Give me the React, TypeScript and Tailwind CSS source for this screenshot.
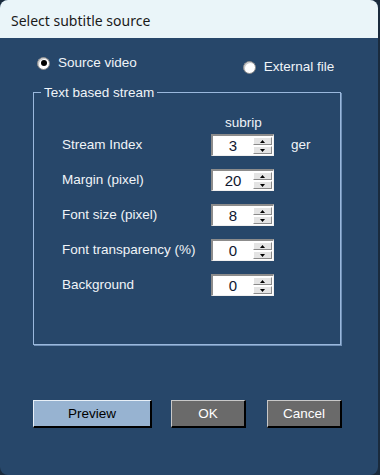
import React from "react";

const ui = { fontFamily: '"Liberation Sans", Arial, sans-serif' };

function Radio({ checked, label }: { checked?: boolean; label: string }) {
  return (
    <label className="flex items-center gap-[8px] text-[13.5px] text-[#f0f4f8]">
      <span className="w-[13px] h-[13px] rounded-full bg-white border border-[#8a8a8a] flex items-center justify-center shadow-[inset_1px_1px_0_#c8c8c8]">
        {checked && <span className="w-[6px] h-[6px] rounded-full bg-black" />}
      </span>
      {label}
    </label>
  );
}

function Spinner({ value }: { value: string }) {
  return (
    <div className="flex w-[63px] h-[22px] bg-white border-t-2 border-l-2 border-t-[#8c8c8c] border-l-[#8c8c8c] border-b border-r border-b-[#f0f0f0] border-r-[#f0f0f0]">
      <div className="flex-1 flex items-center justify-center text-[15px] text-[#101830]">
        {value}
      </div>
      <div className="w-[20px] flex flex-col gap-[1px] py-[1px] pr-[1px]">
        <div className="flex-1 bg-[#e4e4e4] border border-[#8a8a8a] border-t-white border-l-white flex items-center justify-center">
          <svg width="5" height="3" viewBox="0 0 5 3"><path d="M2.5 0L5 3H0z" fill="#000" /></svg>
        </div>
        <div className="flex-1 bg-[#e4e4e4] border border-[#8a8a8a] border-t-white border-l-white flex items-center justify-center">
          <svg width="5" height="3" viewBox="0 0 5 3"><path d="M0 0h5L2.5 3z" fill="#000" /></svg>
        </div>
      </div>
    </div>
  );
}

const rows = [
  { label: "Stream Index", value: "3", extra: "ger" },
  { label: "Margin (pixel)", value: "20" },
  { label: "Font size (pixel)", value: "8" },
  { label: "Font transparency (%)", value: "0" },
  { label: "Background", value: "0" },
];

export default function App() {
  return (
    <div className="w-[380px] h-[475px] bg-[#1a2b3d] pr-[2px]" style={ui}>
      <div className="h-full rounded-[8px] overflow-hidden flex flex-col bg-[#27476a]">
        {/* title bar */}
        <div className="h-[38px] bg-[#eaf5f9] flex items-center pl-[11px] pt-[2px] shrink-0">
          <span className="text-[14px] text-[#1a1a1a]" style={{ fontFamily: '"Noto Sans", "Open Sans", sans-serif' }}>
            Select subtitle source
          </span>
        </div>

        <div className="flex-1 flex flex-col pl-[33px]">
          {/* source radios */}
          <div className="flex items-start mt-[15px] pl-[4px]">
            <Radio checked label="Source video" />
            <div className="ml-[106px] mt-[4px]">
              <Radio label="External file" />
            </div>
          </div>

          {/* group box */}
          <fieldset className="mt-[8px] w-[308px] h-[260px] border border-[#9ab8dc] shadow-[1px_1px_0_#6f8fb5]">
            <legend className="ml-[7px] px-[3px] text-[13.5px] text-[#f0f4f8] leading-[15px]">
              Text based stream
            </legend>
            <div className="pl-[28px] pt-[15px]">
              <div className="pl-[163px] text-[13.5px] text-[#f0f4f8] leading-[15px] mb-[4px]">subrip</div>
              <div className="flex flex-col gap-[13px]">
                {rows.map((r) => (
                  <div key={r.label} className="flex items-center h-[22px]">
                    <span className="w-[149px] text-[13.5px] text-[#f0f4f8]">{r.label}</span>
                    <Spinner value={r.value} />
                    {r.extra && (
                      <span className="ml-[17px] text-[13.5px] text-[#f0f4f8]">{r.extra}</span>
                    )}
                  </div>
                ))}
              </div>
            </div>
          </fieldset>

          {/* buttons */}
          <div className="flex mt-[55px] text-[13.5px]">
            <button className="w-[119px] h-[28px] bg-[#97b3d1] text-black border border-t-[#e8f0f8] border-l-[#e8f0f8] border-b-2 border-r-2 border-b-black border-r-black">
              Preview
            </button>
            <button className="ml-[19px] w-[75px] h-[28px] bg-[#6a6a6a] text-white border border-t-[#c8c8c8] border-l-[#c8c8c8] border-b-2 border-r-2 border-b-black border-r-black">
              OK
            </button>
            <button className="ml-[21px] w-[75px] h-[28px] bg-[#6a6a6a] text-white border border-t-[#c8c8c8] border-l-[#c8c8c8] border-b-2 border-r-2 border-b-black border-r-black">
              Cancel
            </button>
          </div>
        </div>
      </div>
    </div>
  );
}
